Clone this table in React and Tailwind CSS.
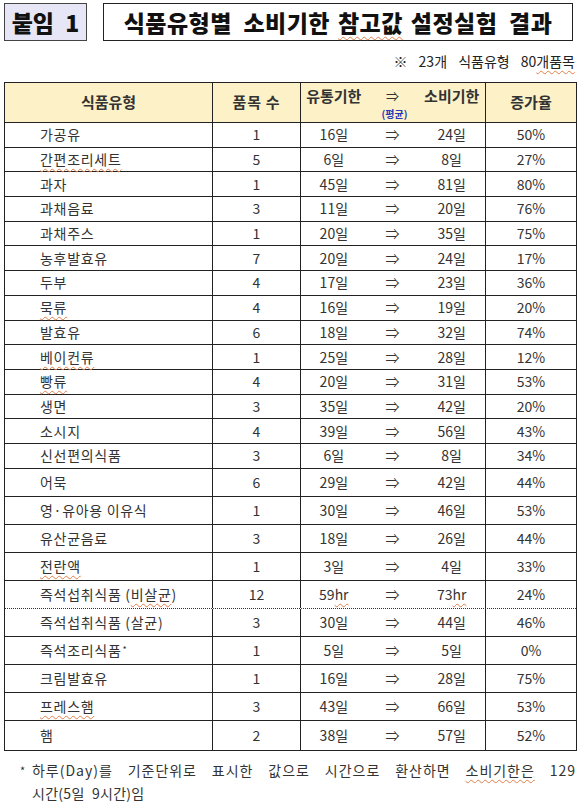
import React from "react";

const rows = [
  ["가공유", "1", "16일", "24일", "50%"],
  [<Sq key="a">간편조리세트</Sq>, "5", "6일", "8일", "27%"],
  ["과자", "1", "45일", "81일", "80%"],
  ["과채음료", "3", "11일", "20일", "76%"],
  ["과채주스", "1", "20일", "35일", "75%"],
  ["농후발효유", "7", "20일", "24일", "17%"],
  ["두부", "4", "17일", "23일", "36%"],
  [<Sq key="b">묵류</Sq>, "4", "16일", "19일", "20%"],
  ["발효유", "6", "18일", "32일", "74%"],
  [<Sq key="c">베이컨류</Sq>, "1", "25일", "28일", "12%"],
  [<Sq key="d">빵류</Sq>, "4", "20일", "31일", "53%"],
  ["생면", "3", "35일", "42일", "20%"],
  ["소시지", "4", "39일", "56일", "43%"],
  ["신선편의식품", "3", "6일", "8일", "34%"],
  ["어묵", "6", "29일", "42일", "44%"],
  ["영·유아용 이유식", "1", "30일", "46일", "53%"],
  ["유산균음료", "3", "18일", "26일", "44%"],
  [<Sq key="e">전란액</Sq>, "1", "3일", "4일", "33%"],
  [<span key="f">즉석섭취식품 (<Sq>비살균</Sq>)</span>, "12", <span key="g">59<Sq>hr</Sq></span>, <span key="h">73<Sq>hr</Sq></span>, "24%"],
  ["즉석섭취식품 (살균)", "3", "30일", "44일", "46%"],
  [<span key="i">즉석조리식품<sup className="text-[9px] relative -top-[3px] ml-[1px]">*</sup></span>, "1", "5일", "5일", "0%"],
  ["크림발효유", "1", "16일", "28일", "75%"],
  [<Sq key="j">프레스햄</Sq>, "3", "43일", "66일", "53%"],
  ["햄", "2", "38일", "57일", "52%"],
];

function Sq({ children }) {
  return (
    <span className="underline decoration-wavy decoration-[#e0804a] decoration-1 underline-offset-[3px]">
      {children}
    </span>
  );
}

export default function App() {
  return (
    <div
      className="w-[582px] h-[803px] bg-white text-[#333] overflow-hidden"
      style={{ fontFamily: '"Noto Sans CJK KR", "Noto Sans", sans-serif' }}
    >
      <div className="flex pt-[3px] pl-[4px] pr-[9px] gap-[16px]">
        <div className="w-[83px] h-[38px] border-[1.5px] border-[#444] bg-[#e6e6f7] flex items-center justify-center text-[23px] font-black text-[#111] [word-spacing:6px]">
          붙임 1
        </div>
        <div className="flex-1 h-[38px] border-[1.5px] border-[#222] flex items-center justify-center text-[23px] font-black text-[#111] tracking-[0.02em] [word-spacing:6px]">
          식품유형별 소비기한 <span className="mx-[8px] underline decoration-wavy decoration-[#e0804a] decoration-1 underline-offset-[4px]">참고값</span> 설정실험 결과
        </div>
      </div>
      <div className="h-[41px] flex items-center justify-end pr-[7px] text-[14px] text-[#222]">
        <span className="[word-spacing:8px]">※ 23개 식품유형 80<Sq>개품목</Sq></span>
      </div>
      <div className="ml-[4px] w-[573px] border border-[#222] text-[14px]">
        <div className="flex h-[40px] bg-[#fdf1c8] border-b border-[#222] font-semibold text-[#333] text-[15px]">
          <div className="w-[208px] flex items-center justify-center border-r border-[#222]">식품유형</div>
          <div className="w-[88px] flex items-center justify-center border-r border-[#222] tracking-wider">품목 수</div>
          <div className="w-[185px] flex flex-col border-r border-[#222]">
            <div className="flex h-[23px] items-end">
              <div className="w-[66px] text-center leading-[20px]">유통기한</div>
              <div className="w-[52px] text-center font-normal text-[13px] leading-[20px]">⇒</div>
              <div className="w-[67px] text-center leading-[20px]">소비기한</div>
            </div>
            <div className="text-center text-[10px] font-bold text-[#2a36b8] leading-none mt-[3px] pl-[3px]">(평균)</div>
          </div>
          <div className="flex-1 flex items-center justify-center">증가율</div>
        </div>
        {rows.map((r, i) => {
          const tall = i >= 14;
          const last = i === rows.length - 1;
          const dotted = i === 18;
          return (
            <div
              key={i}
              className={
                "flex " +
                (tall ? "h-[28.1px] " : "h-[24.7px] ") +
                (last ? "" : dotted ? "border-b border-dotted border-[#333] " : "border-b border-[#222] ")
              }
            >
              <div className="w-[208px] flex items-center pl-[35px] border-r border-[#222] tracking-[0.05em] whitespace-nowrap">
                {r[0]}
              </div>
              <div className="w-[88px] flex items-center justify-center border-r border-[#222]">{r[1]}</div>
              <div className="w-[185px] flex items-center border-r border-[#222]">
                <div className="w-[66px] text-center">{r[2]}</div>
                <div className="w-[52px] text-center">⇒</div>
                <div className="w-[67px] text-center">{r[3]}</div>
              </div>
              <div className="flex-1 flex items-center justify-center">{r[4]}</div>
            </div>
          );
        })}
      </div>
      <div className="mt-[8px] pl-[20px] pr-[6px] text-[14px] leading-[23px] text-[#333] flex">
        <span className="w-[12px] shrink-0 text-[11px]">*</span>
        <div className="flex-1">
          <div className="text-justify [text-align-last:justify] tracking-[0.07em]">
            하루(Day)를 기준단위로 표시한 값으로 시간으로 환산하면 <Sq>소비기한은</Sq> 129
          </div>
          <div className="tracking-[0.02em] [word-spacing:4px]">시간(5일 9시간)임</div>
        </div>
      </div>
    </div>
  );
}
